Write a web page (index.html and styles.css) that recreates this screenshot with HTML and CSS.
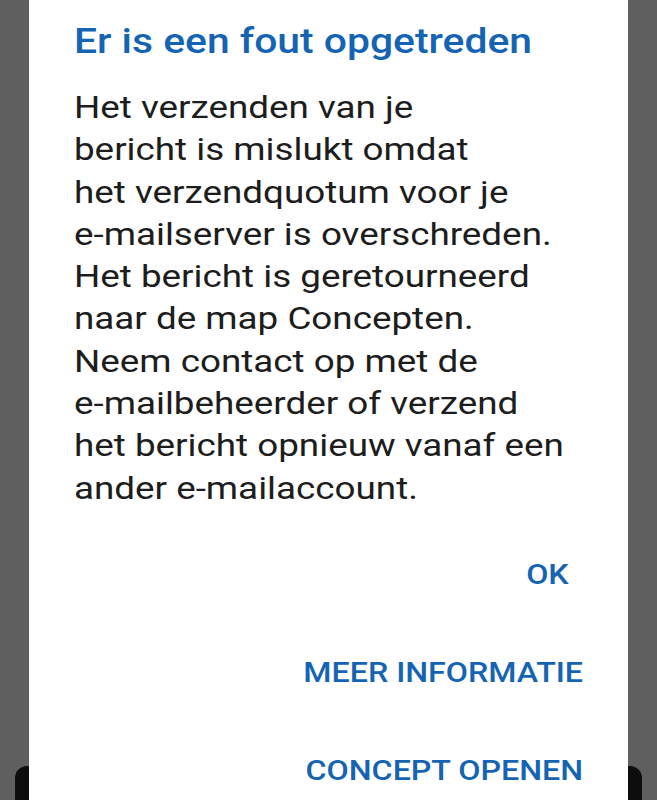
FILE: index.html
```html
<!DOCTYPE html>
<html lang="nl">
<head>
<meta charset="utf-8">
<title>Fout</title>
<link rel="stylesheet" href="styles.css">
</head>
<body>
<div class="under"></div>
<div class="dialog">
  <div class="content">
    <h1 class="title">Er is een fout opgetreden</h1>
    <p class="message">Het verzenden van je<br>bericht is mislukt omdat<br>het verzendquotum voor je<br>e-mailserver is overschreden.<br>Het bericht is geretourneerd<br>naar de map Concepten.<br>Neem contact op met de<br>e-mailbeheerder of verzend<br>het bericht opnieuw vanaf een<br>ander e-mailaccount.</p>
    <div class="actions">
      <button class="btn btn-ok">OK</button>
      <button class="btn">MEER INFORMATIE</button>
      <button class="btn">CONCEPT OPENEN</button>
    </div>
  </div>
</div>
</body>
</html>
```
FILE: styles.css
```css
html, body {
  margin: 0;
  padding: 0;
  height: 100%;
  overflow: hidden;
}
body {
  background: #5f5f5f;
  position: relative;
  font-family: Roboto, "Noto Sans", sans-serif;
}
.under {
  position: absolute;
  left: 15px;
  right: 15px;
  top: 766px;
  height: 34px;
  background: #0d0d0d;
  border-radius: 12px 12px 0 0;
}
.dialog {
  position: relative;
  margin-left: 29px;
  width: 599px;
  height: 800px;
  background: #ffffff;
  overflow: hidden;
}
.content {
  width: 520.9px;
  height: 800px;
  box-sizing: border-box;
  padding: 17px 39.1px 0 39.1px;
  transform: scaleX(1.15);
  transform-origin: 0 0;
  overflow: hidden;
}
.title {
  margin: 0;
  font-size: 35.5px;
  font-weight: 500;
  line-height: 48px;
  color: #1564b4;
  white-space: nowrap;
}
.message {
  margin: 21px 0 0 0;
  font-size: 32px;
  line-height: 42.3px;
  color: #1d1d1d;
  white-space: nowrap;
}
.actions {
  display: flex;
  flex-direction: column;
  align-items: flex-end;
  margin-top: 37.5px;
  gap: 42px;
}
.btn {
  font-family: Roboto, "Noto Sans", sans-serif;
  background: none;
  border: none;
  padding: 0;
  height: 56px;
  font-size: 28px;
  font-weight: 500;
  color: #1564b4;
  text-align: center;
  white-space: nowrap;
}
.btn-ok {
  min-width: 62px;
}
```
